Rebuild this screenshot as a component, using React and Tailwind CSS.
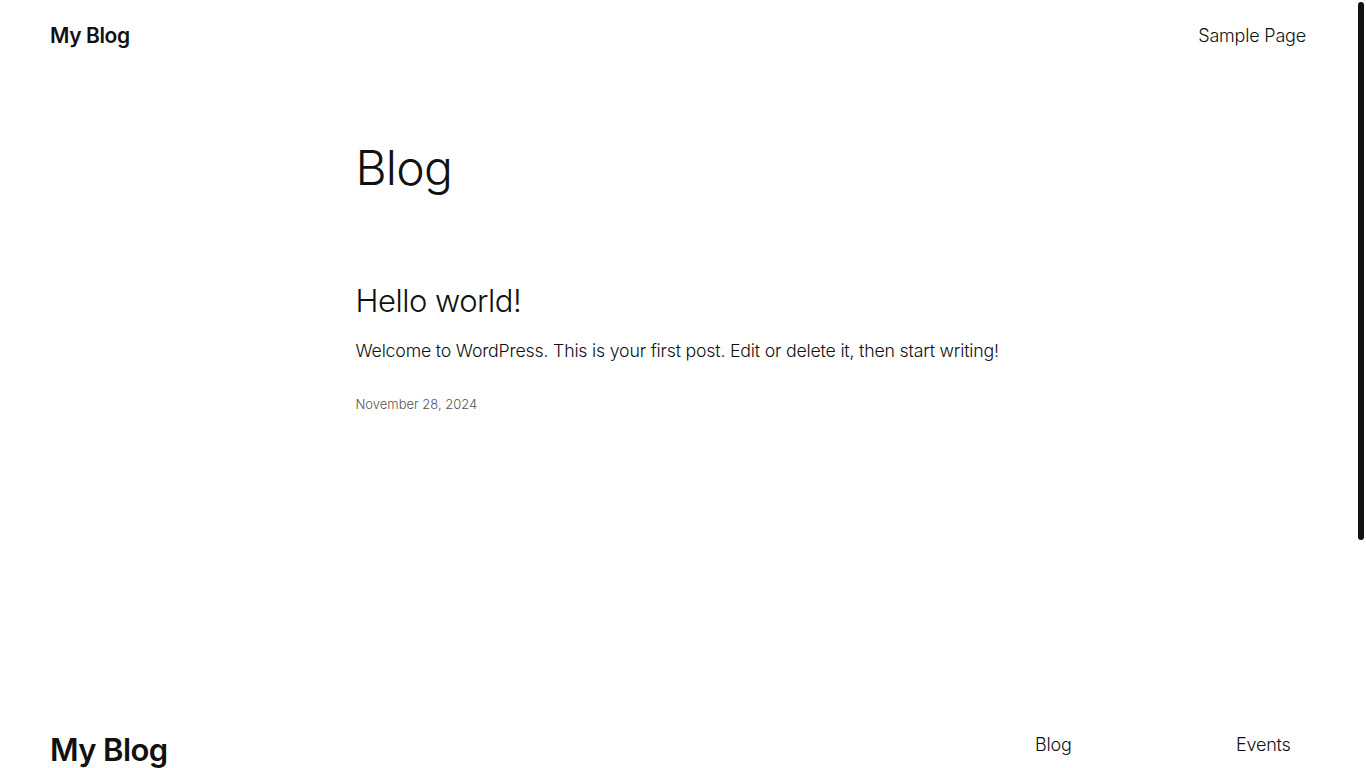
export default function App() {
  const footerCols = [
    { w: 'w-[201px]', items: ['Blog', 'About', 'FAQs', 'Authors'] },
    { w: 'w-[70px]', items: ['Events', 'Shop', 'Patterns', 'Themes'] },
  ];

  return (
    <div className="flex h-screen bg-white text-[#111111] [font-family:Inter,'Noto_Sans',sans-serif]">
      {/* Page */}
      <div className="flex-1 overflow-y-auto [scrollbar-width:none]">
        {/* Header */}
        <header className="flex items-center justify-between px-[50px] py-[20px]">
          <a href="#" className="text-[21px] font-semibold leading-[1.5] tracking-[-0.4px]">
            My Blog
          </a>
          <nav>
            <a href="#" className="text-[18px] font-light leading-[1.5] tracking-[-0.2px]">
              Sample Page
            </a>
          </nav>
        </header>

        {/* Main */}
        <main className="mx-auto w-[645px] pt-[67px] pb-[157px]">
          <h1 className="text-[48px] font-light leading-[1.2] tracking-[-0.8px]">Blog</h1>

          <article className="mt-[86px]">
            <h2 className="text-[31px] font-light leading-[1.2] tracking-[-0.5px]">
              <a href="#">Hello world!</a>
            </h2>
            <p className="mt-[18px] text-[17.75px] font-light leading-[1.6] tracking-[-0.2px]">
              Welcome to WordPress. This is your first post. Edit or delete it, then start writing!
            </p>
            <div className="mt-[29px] text-[13px] font-light leading-[1.5] text-[#555555]">
              November 28, 2024
            </div>
          </article>
        </main>

        {/* Footer */}
        <footer className="flex items-start justify-between px-[50px] pt-[160px] pb-[60px]">
          <div className="text-[31px] font-semibold leading-[1.2] tracking-[-0.6px]">My Blog</div>
          <div className="flex">
            {footerCols.map((col, i) => (
              <ul key={i} className={`flex flex-col gap-[12px] ${col.w}`}>
                {col.items.map((item) => (
                  <li key={item} className="text-[18px] font-light leading-[1.5] tracking-[-0.2px]">
                    <a href="#">{item}</a>
                  </li>
                ))}
              </ul>
            ))}
          </div>
        </footer>
        <div className="flex justify-between px-[50px] pb-[40px] text-[13px] font-light text-[#555555]">
          <span>Twenty Twenty-Five</span>
          <span>Designed with WordPress</span>
        </div>
      </div>

      {/* Scrollbar */}
      <div className="w-[10px] shrink-0 bg-white">
        <div className="mx-[2px] mt-[2px] h-[538px] w-[6px] rounded-full bg-[#111111]" />
      </div>
    </div>
  );
}
